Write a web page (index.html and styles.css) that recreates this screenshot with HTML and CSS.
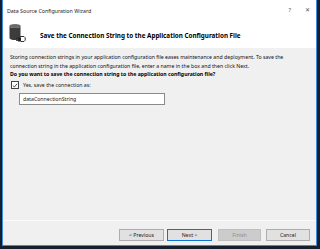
FILE: index.html
```html
<!DOCTYPE html>
<html>
<head>
<meta charset="utf-8">
<link rel="stylesheet" href="styles.css">
</head>
<body>
<div class="window">
  <div class="titlebar">
    <span class="title">Data Source Configuration Wizard</span>
    <span class="tb-btns"><span class="help">?</span><span class="close">✕</span></span>
  </div>
  <div class="header">
    <svg class="icon" width="24" height="20" viewBox="0 0 24 20">
      <ellipse cx="8" cy="3" rx="5.5" ry="2" fill="#555" stroke="#fff" stroke-width="0.6"/>
      <path d="M2.5 3 V15 A5.5 2 0 0 0 13.5 15 V3 A5.5 2 0 0 1 2.5 3Z" fill="#3c3c3c"/>
      <ellipse cx="8" cy="3" rx="5.5" ry="1.8" fill="#6a6a6a"/>
      <path d="M13 13.5 H17 A3 3 0 0 1 17 18.5 H14" fill="none" stroke="#333" stroke-width="1"/>
      <rect x="11" y="14.5" width="3" height="4" fill="#222"/>
      <path d="M9 15.5 H11 M9 17.5 H11" stroke="#222" stroke-width="0.8"/>
    </svg>
    <span class="heading">Save the Connection String to the Application Configuration File</span>
  </div>
  <div class="content">
    <p class="desc">Storing connection strings in your application configuration file eases maintenance and deployment. To save the connection string in the application configuration file, enter a name in the box and then click Next.</p>
    <p class="question">Do you want to save the connection string to the application configuration file?</p>
    <label class="check-row"><span class="checkbox"><svg width="7" height="7" viewBox="0 0 7 7"><path d="M1 3.6 L2.8 5.3 L6 1.4" fill="none" stroke="#222" stroke-width="0.9"/></svg></span>Yes, save the connection as:</label>
    <div class="textbox">dataConnectionString</div>
  </div>
  <div class="footer">
    <button class="btn prev">&lt; Previous</button>
    <button class="btn primary">Next &gt;</button>
    <button class="btn disabled">Finish</button>
    <button class="btn cancel">Cancel</button>
    <span class="grip"></span>
  </div>
</div>
</body>
</html>
```

FILE: styles.css
```css
html, body {
  margin: 0;
  padding: 0;
  width: 320px;
  height: 249px;
  background: #16202c;
  overflow: hidden;
}
body {
  font-family: "Noto Sans", "Open Sans", sans-serif;
  color: #000;
}
.window {
  margin-left: 2px;
  width: 313px;
  height: 245px;
  border: 1px solid #3b8de0;
  border-top: none;
  display: flex;
  flex-direction: column;
  background: #f0f0f0;
}
.titlebar {
  height: 20px;
  background: #fff;
  display: flex;
  align-items: center;
  justify-content: space-between;
  padding: 0 6px 0 4px;
}
.title {
  font-size: 5.3px;
  color: #222;
  padding-top: 1px;
}
.tb-btns {
  display: flex;
  gap: 14px;
  font-size: 6px;
  color: #555;
}
.help { font-size: 6px; }
.close { font-size: 6px; }
.header {
  height: 28px;
  background: #fff;
  display: flex;
  align-items: center;
  padding-left: 4px;
  gap: 9px;
}
.icon { flex: none; margin-top: -2px; }
.heading {
  font-weight: bold;
  font-size: 6.3px;
  padding-top: 3px;
}
.content {
  flex: 1;
  padding: 5px 8px 0 7px;
  border-bottom: 1px solid #fafafa;
}
.desc {
  margin: 0;
  font-size: 5.2px;
  line-height: 8.5px;
  color: #111;
}
.question {
  margin: 0;
  font-weight: bold;
  font-size: 5.2px;
  line-height: 9px;
}
.check-row {
  display: flex;
  align-items: center;
  gap: 4px;
  font-size: 5.2px;
  margin-top: 2px;
  margin-left: 1px;
  color: #222;
}
.checkbox {
  width: 6px;
  height: 6px;
  border: 1px solid #444;
  background: #fff;
  display: flex;
  align-items: center;
  justify-content: center;
}
.checkbox svg { display: block; }
.textbox {
  margin-top: 4px;
  margin-left: 9px;
  width: 141px;
  height: 10px;
  border: 1px solid #8a8a8a;
  background: #fff;
  font-size: 5.2px;
  line-height: 10px;
  padding-left: 3px;
  color: #222;
}
.footer {
  height: 24px;
  display: flex;
  align-items: flex-end;
  justify-content: flex-end;
  padding: 0 6px 4px 0;
  box-sizing: border-box;
  position: relative;
}
.btn {
  width: 45px;
  height: 12px;
  padding: 0;
  margin: 0;
  font-family: inherit;
  font-size: 5.2px;
  background: #e1e1e1;
  border: 1px solid #adadad;
  color: #222;
}
.btn.primary {
  border-color: #0a74d4;
  margin-left: 3px;
}
.btn.disabled {
  background: #cccccc;
  border-color: #bfbfbf;
  color: #8c8c8c;
  margin-left: 6px;
  width: 43px;
}
.btn.cancel { margin-left: 5px; width: 44px; }
.grip {
  position: absolute;
  right: 1px;
  bottom: 1px;
  width: 4px;
  height: 4px;
  background: radial-gradient(circle, #aaa 0.5px, transparent 0.6px) 0 0 / 2px 2px;
}
```
